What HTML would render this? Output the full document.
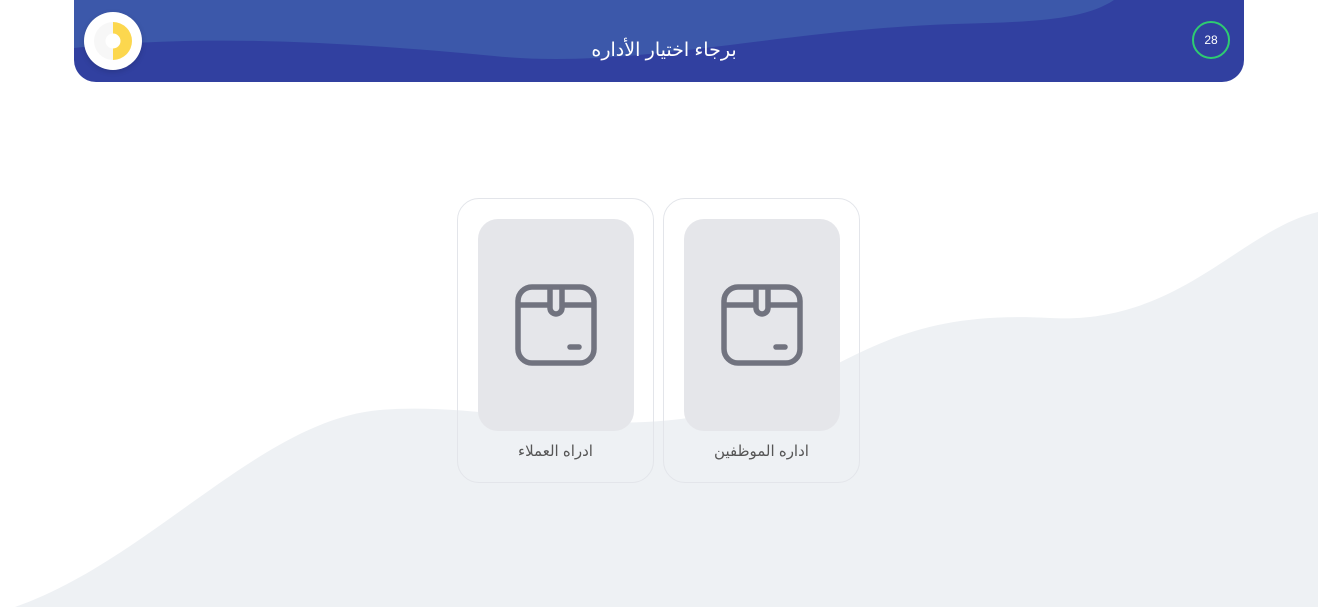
<!DOCTYPE html>
<html><head><meta charset="utf-8"><style>
html,body{margin:0;padding:0;width:1318px;height:607px;overflow:hidden;background:#fff;font-family:"Liberation Sans","DejaVu Sans",sans-serif;}
.bg{position:absolute;left:0;top:0}
.hdr{position:absolute;left:74px;top:0;width:1170px;height:82px;border-radius:0 0 22px 22px;overflow:hidden;background:#3140a0}
.hdr svg{position:absolute;left:0;top:0}
.title{position:absolute;left:5px;width:100%;top:38px;text-align:center;color:#fff;font-size:19px;line-height:26px}
.logo{position:absolute;left:84px;top:12px;width:58px;height:58px;border-radius:50%;background:#fff;box-shadow:0 2px 6px rgba(0,0,0,.15)}
.timer{position:absolute;left:1192px;top:21px;width:34px;height:34px;border:2px solid #2ecc71;border-radius:50%;color:#fff;font-size:12px;text-align:center;line-height:34px}
.card{position:absolute;top:198px;width:195px;height:283px;border:1px solid #e3e5ea;border-radius:22px}
.inner{position:absolute;left:20px;top:20px;width:156px;height:212px;border-radius:20px;background:#e5e6ea}
.inner svg{position:absolute;left:37px;top:65px}
.lbl{position:absolute;left:0;width:100%;top:243px;text-align:center;color:#555;font-size:15px}
</style></head><body>
<svg class="bg" width="1318" height="607"><path d="M15 607 C 150 560, 260 420, 380 410 C 500 400, 620 450, 760 400 C 860 360, 900 310, 1050 318 C 1180 325, 1240 230, 1318 212 L1318 607 Z" fill="#eef1f4"/></svg>
<div class="hdr"><svg width="1170" height="82"><path d="M0 0 H1040 C1010 20, 960 22, 880 24 C 700 30, 560 70, 420 56 C 250 40, 120 35, 0 48 Z" fill="#3c58aa"/></svg>
<div class="title">برجاء اختيار الأداره</div></div>
<div class="logo"><svg width="58" height="58"><circle cx="29" cy="29" r="19" fill="#f7f7f7"/><path d="M29 10 A19 19 0 0 1 29 48 Z" fill="#fcd74e"/><circle cx="29" cy="29" r="7.5" fill="#fff"/></svg></div>
<div class="timer">28</div>
<div class="card" style="left:457px"><div class="inner"><svg width="82" height="82" viewBox="0 0 82 82"><rect x="3" y="3" width="76" height="76" rx="14" fill="none" stroke="#71737f" stroke-width="5.5"/><path d="M3 21 H35 M47 21 H79" stroke="#71737f" stroke-width="5.5" fill="none"/><path d="M35 3 V24 A6 6 0 0 0 47 24 V3" stroke="#71737f" stroke-width="5.5" fill="none"/><path d="M55 63 H64" stroke="#71737f" stroke-width="5.5" stroke-linecap="round"/></svg></div><div class="lbl">ادراه العملاء</div></div>
<div class="card" style="left:663px"><div class="inner"><svg width="82" height="82" viewBox="0 0 82 82"><rect x="3" y="3" width="76" height="76" rx="14" fill="none" stroke="#71737f" stroke-width="5.5"/><path d="M3 21 H35 M47 21 H79" stroke="#71737f" stroke-width="5.5" fill="none"/><path d="M35 3 V24 A6 6 0 0 0 47 24 V3" stroke="#71737f" stroke-width="5.5" fill="none"/><path d="M55 63 H64" stroke="#71737f" stroke-width="5.5" stroke-linecap="round"/></svg></div><div class="lbl">اداره الموظفين</div></div>
</body></html>
